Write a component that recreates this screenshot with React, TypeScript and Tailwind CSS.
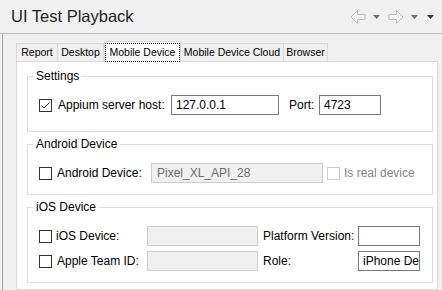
import { ReactNode } from "react"

const font = { fontFamily: '"Segoe UI", "Liberation Sans", Arial, sans-serif' }

const Check = ({ checked = false, disabled = false }: { checked?: boolean; disabled?: boolean }) => (
  <div
    className={
      "w-[13px] h-[13px] shrink-0 border bg-white flex items-center justify-center " +
      (disabled ? "border-[#cccccc]" : "border-[#333333]")
    }
  >
    {checked && (
      <svg width="11" height="11" viewBox="0 0 11 11">
        <polyline points="1.5,5.5 4,8 9.5,2.5" fill="none" stroke="#333" strokeWidth="1" />
      </svg>
    )}
  </div>
)

const Input = ({ value, className }: { value?: string; className: string }) => (
  <div className={"h-[20px] border border-[#7a7a7a] bg-white flex items-center pl-[4px] overflow-hidden whitespace-nowrap " + className}>
    {value}
  </div>
)

const Disabled = ({ value, className }: { value?: string; className: string }) => (
  <div className={"h-[20px] border border-[#cccccc] bg-[#f0f0f0] flex items-center pl-[5px] text-[#6d6d6d] " + className}>
    {value}
  </div>
)

const Group = ({ title, className, children }: { title: string; className?: string; children: ReactNode }) => (
  <fieldset className={"w-[406px] border border-[#dcdcdc] " + (className ?? "")}>
    <legend className="ml-[5px] px-[3px] leading-[16px]">{title}</legend>
    {children}
  </fieldset>
)

const Arrow = ({ flip }: { flip?: boolean }) => (
  <svg width="16" height="14" viewBox="0 0 16 14" style={flip ? { transform: "scaleX(-1)" } : undefined}>
    <path d="M1 7 L7.5 0.5 V4.5 H15 V9.5 H7.5 V13.5 Z" fill="#f7f7f7" stroke="#bdbdbd" strokeWidth="1" />
  </svg>
)

const Tri = ({ color }: { color: string }) => (
  <svg width="7" height="4" viewBox="0 0 7 4">
    <path d="M0 0 H7 L3.5 4 Z" fill={color} />
  </svg>
)

const tabs = [
  { label: "Report", w: "w-[42px]" },
  { label: "Desktop", w: "w-[46px]" },
  { label: "Mobile Device", w: "w-[77px]", active: true },
  { label: "Mobile Device Cloud", w: "w-[103px]" },
  { label: "Browser", w: "w-[44px]" },
]

export default function App() {
  return (
    <div className="w-[442px] h-[290px] bg-[#f0f0f0] overflow-hidden text-[12px] text-black" style={font}>
      <div className="h-[33px] flex items-center justify-between pl-[11px] pr-[8px]">
        <div className="text-[16.5px] text-[#1e1e1e] leading-none pb-[1px]">UI Test Playback</div>
        <div className="flex items-center">
          <Arrow />
          <div className="ml-[7px]"><Tri color="#6e6e6e" /></div>
          <div className="ml-[8px]"><Arrow flip /></div>
          <div className="ml-[7px]"><Tri color="#6e6e6e" /></div>
          <div className="ml-[9px]"><Tri color="#3d2a6b" /></div>
        </div>
      </div>
      <div className="h-px bg-[#b9b9b9]" />
      <div className="flex h-[256px]">
        <div className="w-[2px]" />
        <div className="w-px bg-[#a0a0a0]" />
        <div className="pl-[13px] pt-[7px] flex flex-col">
          <div className="flex items-end h-[21px] -mb-px relative z-10 text-[10.5px] whitespace-nowrap">
            {tabs.map((t) =>
              t.active ? (
                <div key={t.label} className={"h-[21px] bg-white border-x border-t border-[#d9d9d9] " + t.w}>
                  <div className="h-[19px] mt-px border border-dotted border-[#222] flex items-center justify-center">
                    {t.label}
                  </div>
                </div>
              ) : (
                <div
                  key={t.label}
                  className={"h-[18px] mb-px bg-[#f0f0f0] border-t border-r border-[#d9d9d9] flex items-center justify-center first:border-l " + t.w}
                >
                  {t.label}
                </div>
              )
            )}
          </div>
          <div className="w-[422px] flex-1 bg-white border border-[#d9d9d9] pt-[6px] pl-[10px]">
            <Group title="Settings">
              <div className="flex items-center pt-[11px] pb-[16px] pl-[11px]">
                <div className="w-[132px] flex items-center">
                  <Check checked />
                  <span className="ml-[6px]">Appium server host:</span>
                </div>
                <Input value="127.0.0.1" className="w-[108px]" />
                <span className="ml-[10px] w-[30px]">Port:</span>
                <Input value="4723" className="w-[62px]" />
              </div>
            </Group>
            <Group title="Android Device" className="mt-[4px]">
              <div className="flex items-center pt-[11px] pb-[11px] pl-[11px]">
                <div className="w-[112px] flex items-center">
                  <Check />
                  <span className="ml-[5px]">Android Device:</span>
                </div>
                <Disabled value="Pixel_XL_API_28" className="w-[172px]" />
                <div className="ml-[4px] flex items-center">
                  <Check disabled />
                  <span className="ml-[4px] text-[#838383]">Is real device</span>
                </div>
              </div>
            </Group>
            <Group title="iOS Device" className="mt-[4px]">
              <div className="flex flex-col gap-[5px] pt-[11px] pb-[11px] pl-[11px]">
                <div className="flex items-center">
                  <div className="w-[108px] flex items-center">
                    <Check />
                    <span className="ml-[4px]">iOS Device:</span>
                  </div>
                  <Disabled className="w-[111px]" />
                  <span className="ml-[5px] w-[95px]">Platform Version:</span>
                  <Input className="w-[62px]" />
                </div>
                <div className="flex items-center">
                  <div className="w-[108px] flex items-center">
                    <Check />
                    <span className="ml-[5px]">Apple Team ID:</span>
                  </div>
                  <Disabled className="w-[111px]" />
                  <span className="ml-[5px] w-[95px]">Role:</span>
                  <Input value="iPhone Device" className="w-[62px] pl-[3px]" />
                </div>
              </div>
            </Group>
          </div>
        </div>
      </div>
    </div>
  )
}
